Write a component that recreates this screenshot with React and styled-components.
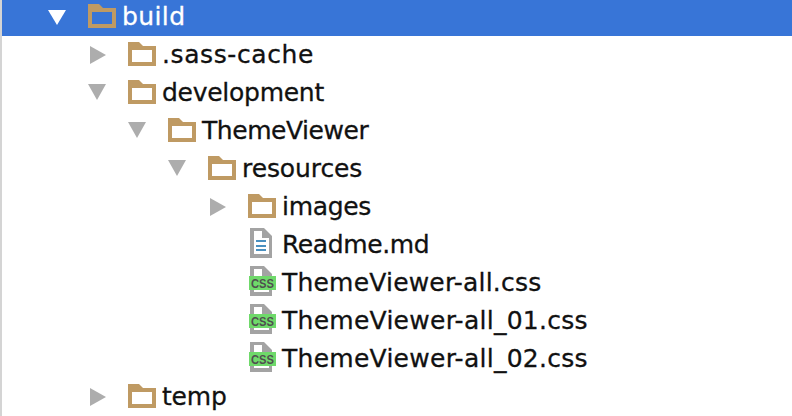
import styled, { createGlobalStyle } from 'styled-components';

const GlobalStyle = createGlobalStyle`
  html, body {
    margin: 0;
    padding: 0;
    background: #fff;
  }
`;

const Tree = styled.div`
  width: 792px;
  height: 416px;
  overflow: hidden;
  box-sizing: border-box;
  border-left: 2px solid #d4d4d4;
  background: #fff;
  font-family: "DejaVu Sans", sans-serif;
  font-size: 25px;
  color: #111;
`;

const Row = styled.div`
  display: flex;
  align-items: center;
  box-sizing: border-box;
  height: 38px;
  padding-left: ${(p) => 46 + p.$depth * 40}px;
  background: ${(p) => (p.$selected ? '#3875d7' : 'transparent')};
  color: ${(p) => (p.$selected ? '#fff' : '#111')};
  ${(p) => p.$selected && 'margin-top: -2px;'}
`;

const Toggle = styled.span`
  display: flex;
  align-items: center;
  width: 40px;
  height: 100%;
  flex: none;
`;

const IconSlot = styled.span`
  display: flex;
  align-items: center;
  flex: none;
  margin-right: 6px;
  margin-bottom: 2px;
`;

const Label = styled.span`
  white-space: nowrap;
  line-height: 38px;
  letter-spacing: ${(p) => p.$track || 0}px;
  -webkit-text-stroke: 0.3px currentColor;
`;

const Arrow = ({ open, light }) => (
  <svg width="20" height="20" viewBox="0 0 20 20">
    {open
      ? <path d={light ? 'M0 3H18L9 18Z' : 'M0 1H18L9 17Z'} fill={light ? '#fff' : '#adadad'} />
      : <path d="M2 1V19L18 10Z" fill="#adadad" />}
  </svg>
);

const Folder = () => (
  <svg width="28" height="24" viewBox="0 0 28 24">
    <path
      fillRule="evenodd"
      fill="#bf9a63"
      d="M0 0H11L15 4H28V24H0ZM4 8V20H24V8Z"
    />
  </svg>
);

const DocPage = ({ children }) => (
  <svg width="28" height="32" viewBox="0 0 28 32">
    <path
      fillRule="evenodd"
      fill="#a3a3a3"
      d="M2 0H16L24 8V30H2ZM6 3V26H21V10H14V3Z"
    />
    {children}
  </svg>
);

const MdIcon = () => (
  <DocPage>
    <path d="M8 12H18V14H8ZM8 17H18V19H8ZM8 21H18V23H8Z" fill="#4a90c0" />
  </DocPage>
);

const CssIcon = () => (
  <DocPage>
    <rect x="1" y="10" width="27" height="14" fill="#6fd96a" />
    <text
      x="14.5"
      y="22"
      textAnchor="middle"
      fontFamily="Liberation Sans, sans-serif"
      fontWeight="700"
      fontSize="12.5"
      textLength="23"
      lengthAdjust="spacingAndGlyphs"
      fill="#4f4f4f"
    >
      CSS
    </text>
  </DocPage>
);

const items = [
  { name: 'build', depth: 0, open: true, selected: true, track: 0.4 },
  { name: '.sass-cache', depth: 1, open: false, track: 0.6 },
  { name: 'development', depth: 1, open: true, track: -0.27 },
  { name: 'ThemeViewer', depth: 2, open: true, track: -0.45 },
  { name: 'resources', depth: 3, open: true, track: -0.1 },
  { name: 'images', depth: 4, open: false, track: -0.3 },
  { name: 'Readme.md', depth: 4, icon: 'md', track: -0.4 },
  { name: 'ThemeViewer-all.css', depth: 4, icon: 'css', track: 0.2 },
  { name: 'ThemeViewer-all_01.css', depth: 4, icon: 'css', track: 0.27 },
  { name: 'ThemeViewer-all_02.css', depth: 4, icon: 'css', track: 0.27 },
  { name: 'temp', depth: 1, open: false, track: -0.2 },
];

const App = () => (
  <>
    <GlobalStyle />
    <Tree>
      {items.map((item) => (
        <Row key={item.name} $depth={item.depth} $selected={item.selected}>
          <Toggle>
            {!item.icon && <Arrow open={item.open} light={item.selected} />}
          </Toggle>
          <IconSlot>
            {item.icon === 'md' && <MdIcon />}
            {item.icon === 'css' && <CssIcon />}
            {!item.icon && <Folder />}
          </IconSlot>
          <Label $track={item.track}>{item.name}</Label>
        </Row>
      ))}
    </Tree>
  </>
);

export default App;
